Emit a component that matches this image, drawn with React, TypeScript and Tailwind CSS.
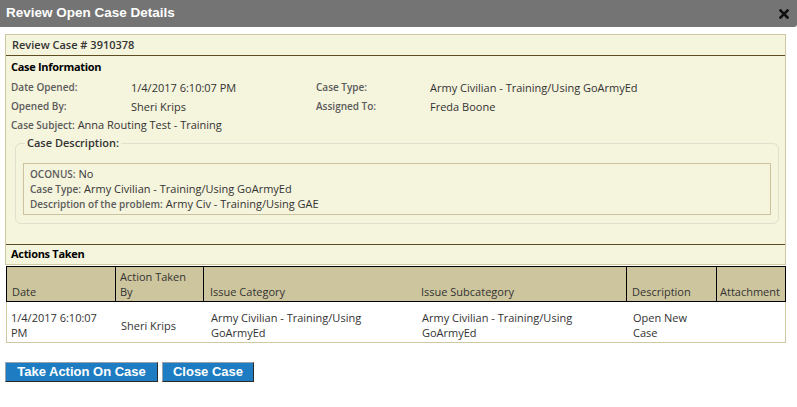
import React from 'react';

const body = { fontFamily: '"Open Sans", "Noto Sans", sans-serif' };

const CloseIcon: React.FC = () => (
  <svg width="10" height="10" viewBox="0 0 10 10">
    <path d="M1.5 1.5 L8.5 8.5 M8.5 1.5 L1.5 8.5" stroke="#111" strokeWidth="2.6" strokeLinecap="square" />
  </svg>
);

const Label: React.FC<{ children: React.ReactNode }> = ({ children }) => (
  <span className="text-[10px] font-semibold text-[#5b5b5b]">{children}</span>
);

const App: React.FC = () => {
  return (
    <div className="w-[797px] h-[407px] bg-white overflow-hidden text-[#333]" style={body}>
      {/* Title bar */}
      <div className="h-[27px] bg-[#747474] flex items-center justify-between pl-[6px] pr-[8px] rounded-br-[3px]">
        <span className="text-white font-bold text-[13.5px]" style={{ fontFamily: '"Liberation Sans", Arial, sans-serif' }}>
          Review Open Case Details
        </span>
        <CloseIcon />
      </div>

      {/* Case panel */}
      <div className="mt-[7px] ml-[5px] w-[781px] border border-[#cfc8a2] bg-[#f5f4dc]">
        <div className="h-[21px] flex items-center pl-[6px] border-b border-[#5e4d22] text-[11px] font-semibold text-[#333]">
          Review Case # 3910378
        </div>
        <div className="h-[22px] flex items-center pl-[5px] text-[11px] tracking-[-0.3px] font-bold text-black">
          Case Information
        </div>

        <div className="grid grid-cols-[120px_185px_114px_1fr] pl-[5px] text-[11px] leading-[19px] items-center">
          <Label>Date Opened:</Label>
          <span>1/4/2017 6:10:07 PM</span>
          <Label>Case Type:</Label>
          <span>Army Civilian - Training/Using GoArmyEd</span>
          <Label>Opened By:</Label>
          <span>Sheri Krips</span>
          <Label>Assigned To:</Label>
          <span>Freda Boone</span>
        </div>
        <div className="pl-[5px] h-[19px] flex items-center gap-[3px] text-[11px]">
          <Label>Case Subject:</Label>
          <span>Anna Routing Test - Training</span>
        </div>

        <fieldset className="ml-[9px] mr-[6px] border border-[#e2dfcf] rounded-[6px] px-[7px] pb-[8px]">
          <legend className="ml-[2px] px-[2px] text-[11px] font-semibold text-[#333]">Case Description:</legend>
          <div className="mt-[11px] border border-[#cbc39d] px-[6px] pt-[3px] pb-[2px] text-[11px]">
            <div className="h-[15px] flex items-center gap-[3px]">
              <Label>OCONUS:</Label>
              <span>No</span>
            </div>
            <div className="h-[15px] flex items-center gap-[3px]">
              <Label>Case Type:</Label>
              <span>Army Civilian - Training/Using GoArmyEd</span>
            </div>
            <div className="h-[15px] flex items-center gap-[3px]">
              <Label>Description of the problem:</Label>
              <span>Army Civ - Training/Using GAE</span>
            </div>
          </div>
        </fieldset>

        <div className="mt-[20px] border-t border-[#5e4d22] h-[20px] flex items-center pl-[5px] text-[11px] tracking-[-0.3px] font-bold text-black">
          Actions Taken
        </div>
      </div>

      {/* Actions table */}
      <div className="mt-[1px] ml-[6px] w-[780px] text-[11px] leading-[15px] text-[#333]">
        <div className="flex h-[36px] bg-[#cdc59d] border border-black">
          <div className="w-[109px] border-r border-black flex items-end pl-[5px] pb-[2px]">Date</div>
          <div className="w-[88px] border-r border-black flex items-end pl-[4px] pb-[2px]">
            Action Taken
            <br />
            By
          </div>
          <div className="w-[212px] flex items-end pl-[6px] pb-[2px]">Issue Category</div>
          <div className="w-[211px] border-r border-black flex items-end pl-[5px] pb-[2px]">Issue Subcategory</div>
          <div className="w-[90px] border-r border-black flex items-end pl-[5px] pb-[2px]">Description</div>
          <div className="flex-1 flex items-end pl-[3px] pb-[2px]">Attachment</div>
        </div>
        <div className="flex h-[41px] pt-[7px] bg-white border border-t-0 border-[#cfc8a2] items-center">
          <div className="w-[110px] pl-[4px]">
            1/4/2017 6:10:07
            <br />
            PM
          </div>
          <div className="w-[88px] pl-[4px]">Sheri Krips</div>
          <div className="w-[212px] pl-[6px]">
            Army Civilian - Training/Using
            <br />
            GoArmyEd
          </div>
          <div className="w-[211px] pl-[5px]">
            Army Civilian - Training/Using
            <br />
            GoArmyEd
          </div>
          <div className="w-[90px] pl-[5px]">
            Open New
            <br />
            Case
          </div>
          <div className="flex-1" />
        </div>
      </div>

      {/* Buttons */}
      <div className="mt-[19px] ml-[5px] flex gap-[4px]" style={{ fontFamily: '"Liberation Sans", Arial, sans-serif' }}>
        <button className="h-[20px] w-[153px] bg-[#1e7dc2] text-white font-bold text-[13px] leading-none border border-t-[#9aa3aa] border-l-[#9aa3aa] border-r-[#2a2a2a] border-b-[#2a2a2a]">
          Take Action On Case
        </button>
        <button className="h-[20px] w-[92px] bg-[#1e7dc2] text-white font-bold text-[13px] leading-none border border-t-[#9aa3aa] border-l-[#9aa3aa] border-r-[#2a2a2a] border-b-[#2a2a2a]">
          Close Case
        </button>
      </div>
    </div>
  );
};

export default App;
